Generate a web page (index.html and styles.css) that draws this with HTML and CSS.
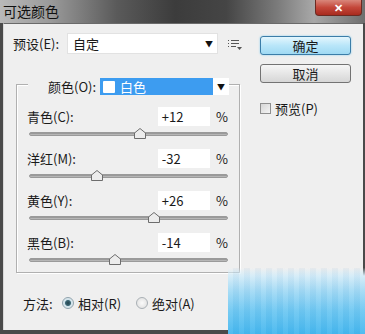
FILE: index.html
```html
<!DOCTYPE html>
<html lang="zh-CN">
<head>
  <meta charset="UTF-8" />
  <title>可选颜色</title>
  <link rel="stylesheet" href="styles.css">
</head>
<body>

<div class="window">
  <div class="titlebar">
    <span class="title">可选颜色</span>
    <span class="close">✕</span>
  </div>

  <div class="dialog">
    <div class="main">
      <div class="preset-row">
        <span class="preset-label">预设(E):</span>
        <div class="preset-select">
          <span>自定</span>
          <span class="arrow">▼</span>
        </div>
        <svg class="menu-icon" width="14" height="10" viewBox="0 0 14 10">
          <rect x="0" y="0" width="1" height="1" fill="#555"/>
          <rect x="3" y="0" width="8" height="1" fill="#555"/>
          <rect x="0" y="3" width="1" height="1" fill="#555"/>
          <rect x="3" y="3" width="8" height="1" fill="#555"/>
          <rect x="0" y="6" width="1" height="1" fill="#555"/>
          <rect x="3" y="6" width="5" height="1" fill="#555"/>
          <polygon points="9,7 14,7 11.5,10" fill="#555"/>
        </svg>
      </div>

      <div class="group">
        <div class="group-head">
          <span class="color-label">颜色(O):</span>
          <div class="color-select">
            <span class="swatch"></span>
            <span>白色</span>
          </div>
          <div class="color-arrow">▼</div>
        </div>

        <div class="row">
          <div class="row-top">
            <span class="row-label">青色(C):</span>
            <span class="value">+12</span>
            <span class="pct">%</span>
          </div>
          <div class="slider">
            <div class="track"></div>
            <svg class="thumb" style="left: calc(56% - 6px)" width="12" height="11" viewBox="0 0 12 11"><polygon points="6,0.5 11.5,5 11.5,10.5 0.5,10.5 0.5,5" fill="#ececec" stroke="#6d6d6d"/></svg>
          </div>
        </div>

        <div class="row">
          <div class="row-top">
            <span class="row-label">洋红(M):</span>
            <span class="value">-32</span>
            <span class="pct">%</span>
          </div>
          <div class="slider">
            <div class="track"></div>
            <svg class="thumb" style="left: calc(34% - 6px)" width="12" height="11" viewBox="0 0 12 11"><polygon points="6,0.5 11.5,5 11.5,10.5 0.5,10.5 0.5,5" fill="#ececec" stroke="#6d6d6d"/></svg>
          </div>
        </div>

        <div class="row">
          <div class="row-top">
            <span class="row-label">黄色(Y):</span>
            <span class="value">+26</span>
            <span class="pct">%</span>
          </div>
          <div class="slider">
            <div class="track"></div>
            <svg class="thumb" style="left: calc(63% - 6px)" width="12" height="11" viewBox="0 0 12 11"><polygon points="6,0.5 11.5,5 11.5,10.5 0.5,10.5 0.5,5" fill="#ececec" stroke="#6d6d6d"/></svg>
          </div>
        </div>

        <div class="row">
          <div class="row-top">
            <span class="row-label">黑色(B):</span>
            <span class="value">-14</span>
            <span class="pct">%</span>
          </div>
          <div class="slider">
            <div class="track"></div>
            <svg class="thumb" style="left: calc(43% - 6px)" width="12" height="11" viewBox="0 0 12 11"><polygon points="6,0.5 11.5,5 11.5,10.5 0.5,10.5 0.5,5" fill="#ececec" stroke="#6d6d6d"/></svg>
          </div>
        </div>
      </div>

      <div class="method-row">
        <span class="method-label">方法:</span>
        <span class="radio checked"></span>
        <span class="radio-text">相对(R)</span>
        <span class="radio"></span>
        <span class="radio-text">绝对(A)</span>
      </div>
    </div>

    <div class="side">
      <div class="btn btn-ok">确定</div>
      <div class="btn btn-cancel">取消</div>
      <div class="check-row">
        <span class="checkbox"></span>
        <span>预览(P)</span>
      </div>
    </div>
  </div>

  <div class="watermark"></div>
</div>

</body>
</html>
```

FILE: styles.css
```css
body {
  margin: 0;
  padding: 0;
  font-family: "Noto Sans CJK SC", "Noto Sans", sans-serif;
  font-size: 13px;
  color: #1a1a1a;
  background: #ffffff;
}
.window {
  position: relative;
  width: 365px;
  height: 334px;
  overflow: hidden;
  background: #4a4a4a;
}
.titlebar {
  height: 23px;
  display: flex;
  align-items: flex-start;
  justify-content: space-between;
  background: linear-gradient(90deg, #b9b9b9 0%, #9a9a9a 14%, #5a5a5a 32%, #3c3c3c 48%, #454545 62%, #7b7b7b 76%, #a8a8a8 86%, #6e6e6e 100%);
}
.title {
  font-size: 14px;
  line-height: 22px;
  padding-left: 3px;
  color: #111;
}
.close {
  width: 45px;
  height: 15px;
  margin-right: 3px;
  background: linear-gradient(#d9877b, #c4473a 50%, #a82b1f);
  border: 1px solid #6b2a22;
  border-top: none;
  border-radius: 0 0 4px 4px;
  color: #fff;
  font-size: 11px;
  font-weight: bold;
  line-height: 15px;
  text-align: center;
}
.dialog {
  display: flex;
  height: 307px;
  box-sizing: border-box;
  margin: 0 2px 0 3px;
  background: #efefef;
  border-top: 1px solid #6a6a6a;
  border-left: 1px solid #d8d8d8;
  padding-top: 9px;
}
.main {
  width: 246px;
  box-sizing: border-box;
  padding-left: 9px;
}
.preset-row {
  display: flex;
  align-items: center;
  height: 21px;
}
.preset-label {
  width: 54px;
}
.preset-select {
  width: 151px;
  height: 21px;
  box-sizing: border-box;
  display: flex;
  align-items: center;
  justify-content: space-between;
  padding: 0 4px 0 5px;
  background: #fff;
  border: 1px solid #e2e2e2;
}
.arrow, .color-arrow {
  font-size: 8px;
  color: #111;
}
.menu-icon {
  margin-left: 10px;
  margin-top: 2px;
}
.group {
  margin: 30px 0 0 3px;
  width: 224px;
  height: 189px;
  box-sizing: border-box;
  border: 1px solid #b0b0b0;
  box-shadow: inset 1px 1px 0 #fff, 1px 1px 0 #fff;
  padding: 0 11px 0 10px;
}
.group-head {
  display: flex;
  align-items: center;
  height: 17px;
  margin: -7px 0 12px 1px;
  width: 201px;
  background: #efefef;
}
.color-label {
  width: 52px;
  padding-left: 20px;
}
.color-select {
  width: 113px;
  height: 17px;
  display: flex;
  align-items: center;
  gap: 5px;
  background: #3d9cf0;
  color: #fff;
  padding-left: 3px;
  box-sizing: border-box;
}
.swatch {
  width: 12px;
  height: 12px;
  background: #fff;
  border-radius: 1px;
}
.color-arrow {
  width: 16px;
  height: 17px;
  line-height: 17px;
  text-align: center;
  background: #fff;
}
.row {
  display: flex;
  flex-direction: column;
  margin-bottom: 9px;
}
.row-top {
  display: flex;
  align-items: center;
  height: 19px;
}
.row-label {
  width: 133px;
}
.value {
  width: 53px;
  height: 19px;
  box-sizing: border-box;
  padding-left: 4px;
  line-height: 19px;
  background: #fff;
}
.pct {
  margin-left: 6px;
}
.slider {
  position: relative;
  height: 14px;
  margin-left: 2px;
  width: 199px;
}
.track {
  margin-top: 6px;
  height: 4px;
  border-radius: 2px;
  background: linear-gradient(#8c8c8c, #c4c4c4);
  border: 1px solid #9a9a9a;
  box-sizing: border-box;
}
.thumb {
  position: absolute;
  top: 2px;
}
.method-row {
  display: flex;
  align-items: center;
  margin: 22px 0 0 10px;
  height: 16px;
}
.method-label {
  width: 39px;
}
.radio {
  width: 10px;
  height: 10px;
  border-radius: 50%;
  border: 1px solid #a9b0b5;
  background: radial-gradient(#fafafa, #dcdcdc);
  margin-right: 4px;
}
.radio.checked {
  border-color: #8fa3ad;
  background: radial-gradient(#24424c 0, #3a6674 2.5px, #cfe2ea 3.5px, #f2f2f2);
}
.radio-text {
  width: 58px;
}
.side {
  display: flex;
  flex-direction: column;
  margin-left: 10px;
  padding-top: 3px;
}
.btn {
  width: 91px;
  height: 19px;
  box-sizing: border-box;
  line-height: 17px;
  text-align: center;
  border-radius: 3px;
}
.btn-ok {
  background: linear-gradient(#e4f6fd, #b9e6f9 50%, #9fd9f3);
  border: 1px solid #3b7da8;
  box-shadow: 0 0 2px #7fcbee;
}
.btn-cancel {
  margin-top: 9px;
  background: linear-gradient(#f6f6f6, #e6e6e6 50%, #d6d6d6);
  border: 1px solid #737373;
}
.check-row {
  display: flex;
  align-items: center;
  gap: 4px;
  margin-top: 16px;
}
.checkbox {
  width: 11px;
  height: 11px;
  box-sizing: border-box;
  border: 1px solid #8f8f8f;
  background: linear-gradient(135deg, #d6d6d6, #f4f4f4);
}
.watermark {
  position: absolute;
  left: 228px;
  top: 268px;
  width: 137px;
  height: 66px;
  background:
    repeating-linear-gradient(90deg, rgba(255,255,255,0.05) 0 5px, rgba(0,90,160,0.04) 5px 11px),
    linear-gradient(rgba(239,239,239,0) 0%, #d4ecf8 12%, #a3daf5 35%, #6fc8f2 65%, #46b8ef 100%);
}
```
